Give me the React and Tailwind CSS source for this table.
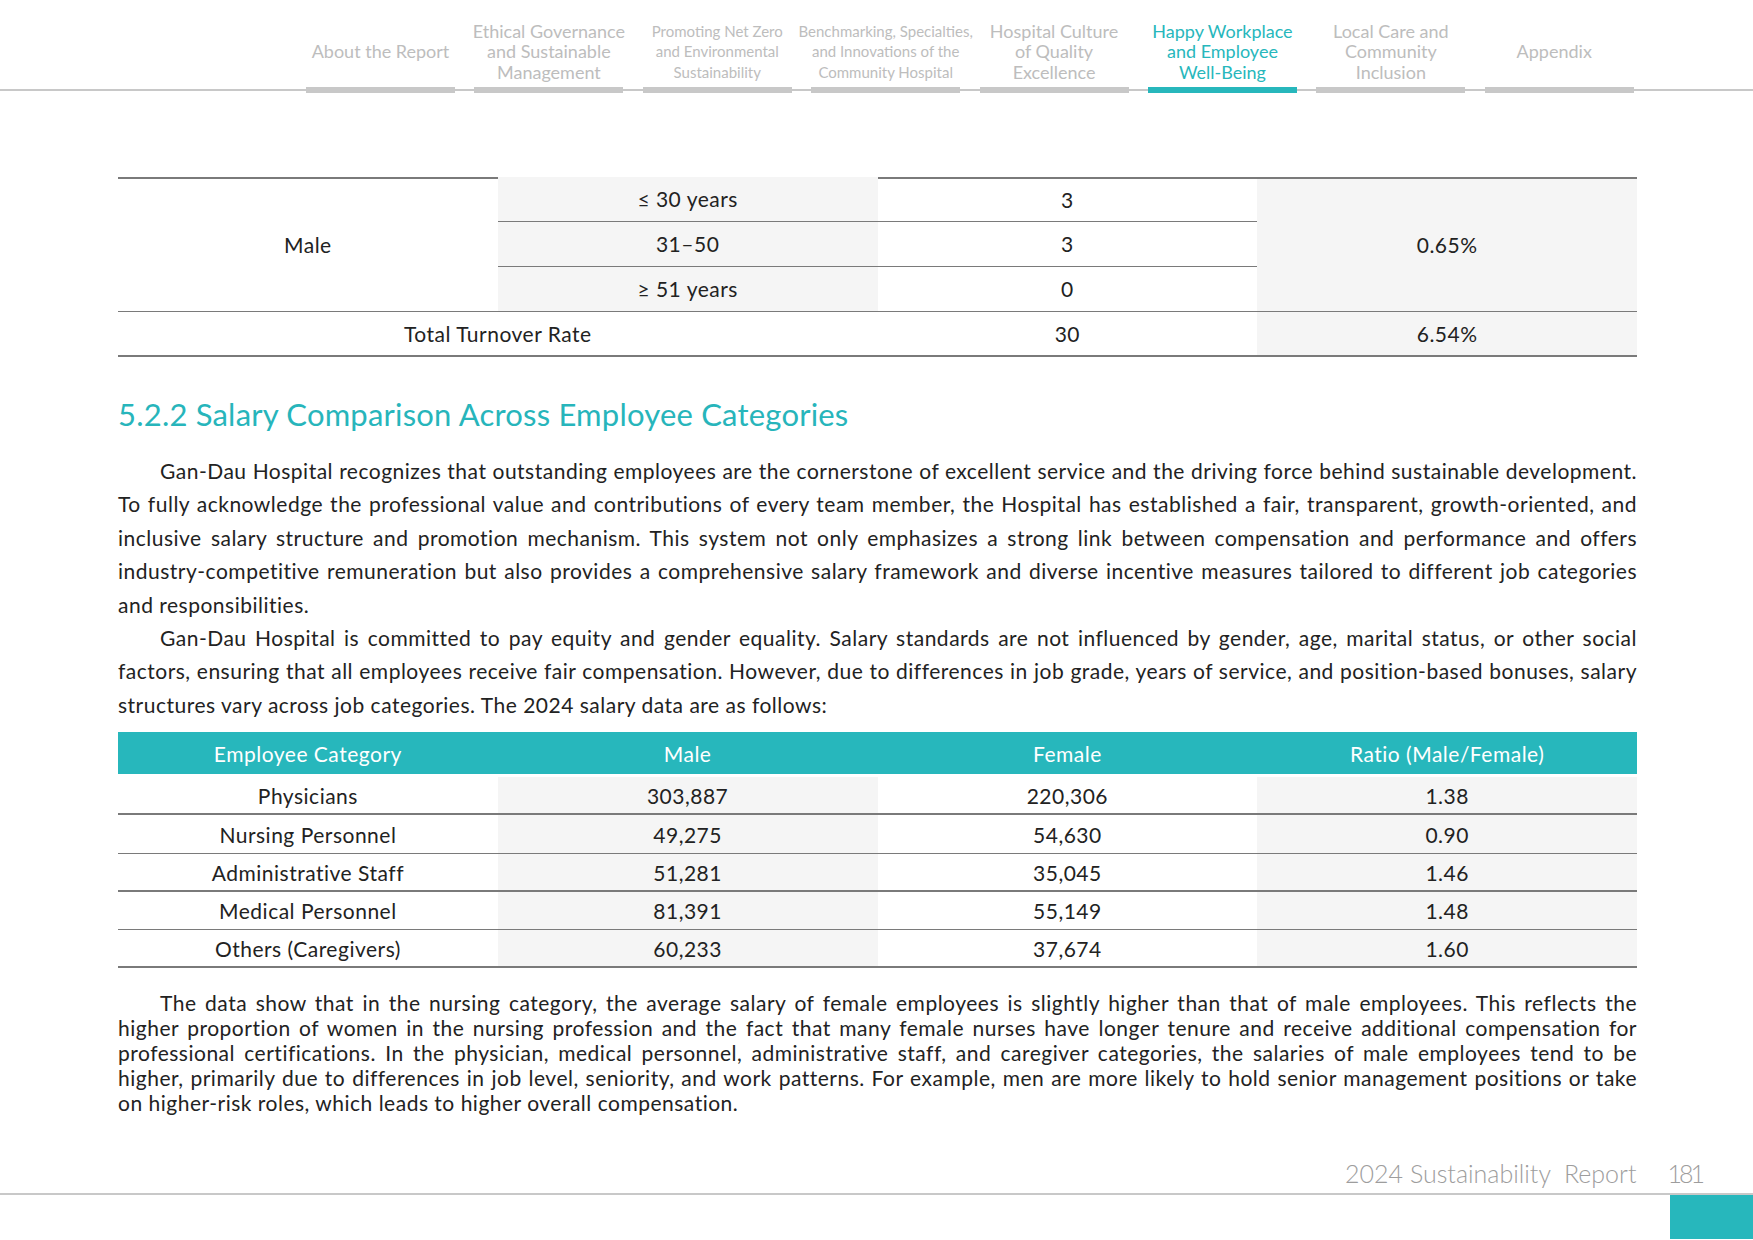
import React from 'react';

const tabs = [
  { lines: ['About the Report'] },
  { lines: ['Ethical Governance', 'and Sustainable', 'Management'] },
  { lines: ['Promoting Net Zero', 'and Environmental', 'Sustainability'], narrow: true },
  { lines: ['Benchmarking, Specialties,', 'and Innovations of the', 'Community Hospital'], narrow: true },
  { lines: ['Hospital Culture', 'of Quality', 'Excellence'] },
  { lines: ['Happy Workplace', 'and Employee', 'Well-Being'], active: true },
  { lines: ['Local Care and', 'Community', 'Inclusion'] },
  { lines: ['Appendix'], shift: true },
];

// lines are kept as in the printed page so the justification matches
const para1 = [
  'Gan-Dau Hospital recognizes that outstanding employees are the cornerstone of excellent service and the driving force behind sustainable development.',
  'To fully acknowledge the professional value and contributions of every team member, the Hospital has established a fair, transparent, growth-oriented, and',
  'inclusive salary structure and promotion mechanism. This system not only emphasizes a strong link between compensation and performance and offers',
  'industry-competitive remuneration but also provides a comprehensive salary framework and diverse incentive measures tailored to different job categories',
  'and responsibilities.',
];

const para2 = [
  'Gan-Dau Hospital is committed to pay equity and gender equality. Salary standards are not influenced by gender, age, marital status, or other social',
  'factors, ensuring that all employees receive fair compensation. However, due to differences in job grade, years of service, and position-based bonuses, salary',
  'structures vary across job categories. The 2024 salary data are as follows:',
];

const para3 = [
  'The data show that in the nursing category, the average salary of female employees is slightly higher than that of male employees. This reflects the',
  'higher proportion of women in the nursing profession and the fact that many female nurses have longer tenure and receive additional compensation for',
  'professional certifications. In the physician, medical personnel, administrative staff, and caregiver categories, the salaries of male employees tend to be',
  'higher, primarily due to differences in job level, seniority, and work patterns. For example, men are more likely to hold senior management positions or take',
  'on higher-risk roles, which leads to higher overall compensation.',
];

const salaries = [
  { cat: 'Physicians', male: '303,887', female: '220,306', ratio: '1.38', h: 'h-[38px]', line: 'border-b-2' },
  { cat: 'Nursing Personnel', male: '49,275', female: '54,630', ratio: '0.90', h: 'h-[39px]', line: 'border-b' },
  { cat: 'Administrative Staff', male: '51,281', female: '35,045', ratio: '1.46', h: 'h-[38px]', line: 'border-b-2' },
  { cat: 'Medical Personnel', male: '81,391', female: '55,149', ratio: '1.48', h: 'h-[38px]', line: 'border-b' },
  { cat: 'Others (Caregivers)', male: '60,233', female: '37,674', ratio: '1.60', h: 'h-[38px]', line: 'border-b-2' },
];

const Paragraph = ({ lines, leading }) => (
  <div className={leading}>
    {lines.map((line, i) => {
      const last = i === lines.length - 1;
      return (
        <div
          key={i}
          className={`whitespace-nowrap ${i === 0 ? 'pl-[42px]' : ''} ${last ? 'text-left' : 'text-justify [text-align-last:justify]'}`}
        >
          {line}
        </div>
      );
    })}
  </div>
);

const App = () => {
  return (
    <div className="w-full min-h-[1240px] bg-white text-[#222] overflow-hidden font-['Lato',sans-serif]">
      {/* top navigation */}
      <nav className="pt-[21px] bg-[linear-gradient(#c8c8c8,#c8c8c8)] bg-no-repeat bg-[length:100%_2px] bg-[position:0_89px]">
        <div className="ml-[306px] flex gap-[19.4px]">
          {tabs.map((tab, i) => (
            <div key={i} className="w-[149px] flex flex-col">
              <div
                className={`h-[61px] flex flex-col items-center justify-center text-center whitespace-nowrap leading-[20.5px] ${
                  tab.narrow ? 'text-[15px]' : 'text-[18px]'
                } ${tab.active ? 'text-[#27b7bc]' : 'text-[#bdbdbd]'} ${tab.shift ? 'pr-[10px]' : ''}`}
              >
                {tab.lines.map((l) => (
                  <span key={l}>{l}</span>
                ))}
              </div>
              <div className={`mt-[5px] h-[6px] ${tab.active ? 'bg-[#27b7bc]' : 'bg-[#c8c8c8]'}`} />
            </div>
          ))}
        </div>
      </nav>

      <main className="mx-[118px] w-[1519px] tracking-[0.5px]">
        {/* turnover table (continued) */}
        <div className="mt-[84px] grid grid-cols-4 grid-rows-[repeat(4,45px)] text-[21px]">
          <div className="row-span-3 flex items-center justify-center border-t-2 border-b border-[#7a7a7a]">Male</div>
          <div className="flex items-center justify-center bg-[#f5f5f5] border-b border-[#7a7a7a]">≤ 30 years</div>
          <div className="flex items-center justify-center border-t-2 border-b border-[#7a7a7a]">3</div>
          <div className="row-span-3 flex items-center justify-center bg-[#f5f5f5] border-t-2 border-b border-[#7a7a7a]">0.65%</div>
          <div className="flex items-center justify-center bg-[#f5f5f5] border-b border-[#7a7a7a]">31–50</div>
          <div className="flex items-center justify-center border-b border-[#7a7a7a]">3</div>
          <div className="flex items-center justify-center bg-[#f5f5f5] border-b border-[#7a7a7a]">≥ 51 years</div>
          <div className="flex items-center justify-center border-b border-[#7a7a7a]">0</div>
          <div className="col-span-2 flex items-center justify-center border-b-2 border-[#7a7a7a]">Total Turnover Rate</div>
          <div className="flex items-center justify-center border-b-2 border-[#7a7a7a]">30</div>
          <div className="flex items-center justify-center bg-[#f5f5f5] border-b-2 border-[#7a7a7a]">6.54%</div>
        </div>

        <h2 className="mt-[37px] text-[31px] leading-[40px] tracking-[0.2px] text-[#27b5bb]">
          5.2.2 Salary Comparison Across Employee Categories
        </h2>

        <div className="mt-[20px] text-[21px]">
          <Paragraph lines={para1} leading="leading-[33.4px]" />
          <Paragraph lines={para2} leading="leading-[33.4px]" />
        </div>

        {/* salary table */}
        <div className="mt-[11px] text-[21px]">
          <div className="grid grid-cols-4 h-[42px] bg-[#27b7bc] text-white">
            <div className="flex items-center justify-center">Employee Category</div>
            <div className="flex items-center justify-center">Male</div>
            <div className="flex items-center justify-center">Female</div>
            <div className="flex items-center justify-center">Ratio (Male/Female)</div>
          </div>
          <div className="h-[3px]" />
          {salaries.map((r) => (
            <div key={r.cat} className={`grid grid-cols-4 ${r.h} ${r.line} border-[#7a7a7a]`}>
              <div className="flex items-center justify-center">{r.cat}</div>
              <div className="flex items-center justify-center bg-[#f5f5f5]">{r.male}</div>
              <div className="flex items-center justify-center">{r.female}</div>
              <div className="flex items-center justify-center bg-[#f5f5f5]">{r.ratio}</div>
            </div>
          ))}
        </div>

        <div className="mt-[22px] text-[21px]">
          <Paragraph lines={para3} leading="leading-[25px]" />
        </div>
      </main>

      {/* footer */}
      <footer className="mt-[42px]">
        <div className="flex justify-end items-baseline pr-[51px] text-[25px] leading-[32px] font-light text-[#9d9d9d]">
          <span className="whitespace-pre">2024 Sustainability  Report</span>
          <span className="ml-[31px] tracking-[-3px]">181</span>
        </div>
        <div className="mt-[4px] h-[2px] bg-[#c8c8c8]" />
        <div className="ml-auto w-[83px] h-[44px] bg-[#27b7bc]" />
      </footer>
    </div>
  );
};

export default App;
